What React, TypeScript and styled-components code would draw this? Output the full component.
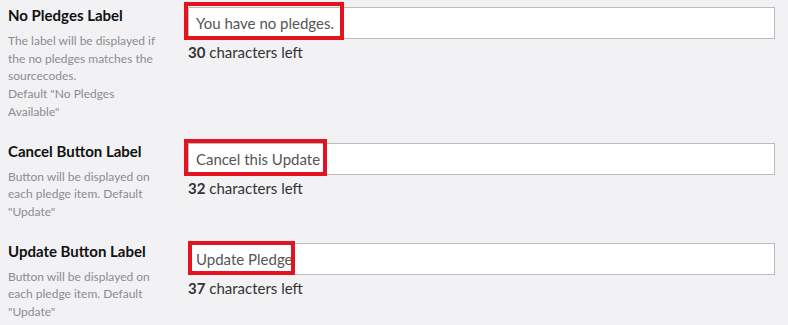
import React from 'react'
import styled, { createGlobalStyle } from 'styled-components'

const GlobalStyle = createGlobalStyle`
  html, body {
    margin: 0;
    padding: 0;
    background: #f2f2f4;
    overflow: hidden;
  }
  body {
    font-family: Lato, "Open Sans", "Liberation Sans", sans-serif;
  }
`

type Mark = { left: number; top: number; width: number; height: number }

type Field = {
  title: string
  desc: string[]
  value: string
  left: number
  mark: Mark
}

const fields: Field[] = [
  {
    title: 'No Pledges Label',
    desc: ['The label will be displayed if the no pledges matches the sourcecodes.', 'Default "No Pledges Available"'],
    value: 'You have no pledges.',
    left: 30,
    mark: { left: -4, top: -5, width: 160, height: 38 },
  },
  {
    title: 'Cancel Button Label',
    desc: ['Button will be displayed on each pledge item. Default "Update"'],
    value: 'Cancel this Update',
    left: 32,
    mark: { left: -4, top: -4, width: 143, height: 37 },
  },
  {
    title: 'Update Button Label',
    desc: ['Button will be displayed on each pledge item. Default "Update"'],
    value: 'Update Pledge',
    left: 37,
    mark: { left: 0, top: -2, width: 107, height: 34 },
  },
]

const App = () => {
  return (
    <Page>
      <GlobalStyle />
      {fields.map((f) => (
        <Row key={f.title}>
          <Info>
            <Title>{f.title}</Title>
            <Desc>
              {f.desc.map((d) => (
                <span key={d}>{d}</span>
              ))}
            </Desc>
          </Info>
          <Control>
            <InputWrap>
              <TextInput defaultValue={f.value} />
              <Highlight $m={f.mark} />
            </InputWrap>
            <Counter>
              <b>{f.left}</b> characters left
            </Counter>
          </Control>
        </Row>
      ))}
    </Page>
  )
}

export default App

const Page = styled.div`
  padding: 5px 13px 0 8px;
  display: flex;
  flex-direction: column;
  gap: 20px;
`
const Row = styled.div`
  display: flex;
  align-items: flex-start;
`
const Info = styled.div`
  width: 155px;
  margin-right: 25px;
  flex-shrink: 0;
`
const Title = styled.div`
  font-size: 15px;
  line-height: 20px;
  font-weight: 700;
  color: #111;
  margin-bottom: 7px;
`
const Desc = styled.div`
  font-size: 12px;
  line-height: 17.7px;
  color: #8c8c90;
  display: flex;
  flex-direction: column;
`
const Control = styled.div`
  flex: 1;
  margin-top: 2px;
`
const InputWrap = styled.div`
  position: relative;
`
const TextInput = styled.input`
  box-sizing: border-box;
  display: block;
  width: 100%;
  height: 32px;
  border: 1px solid #bbbbbf;
  background: #fff;
  padding: 0 7px;
  font-family: Lato, "Open Sans", "Liberation Sans", sans-serif;
  font-size: 15px;
  color: #555;
  outline: none;
`
const Highlight = styled.span<{ $m: Mark }>`
  position: absolute;
  box-sizing: border-box;
  left: ${(p) => p.$m.left}px;
  top: ${(p) => p.$m.top}px;
  width: ${(p) => p.$m.width}px;
  height: ${(p) => p.$m.height}px;
  border: 4px solid #e3141f;
  pointer-events: none;
`
const Counter = styled.div`
  margin-top: 3px;
  font-size: 15px;
  line-height: 20px;
  color: #333;
  b {
    font-weight: 700;
  }
`
